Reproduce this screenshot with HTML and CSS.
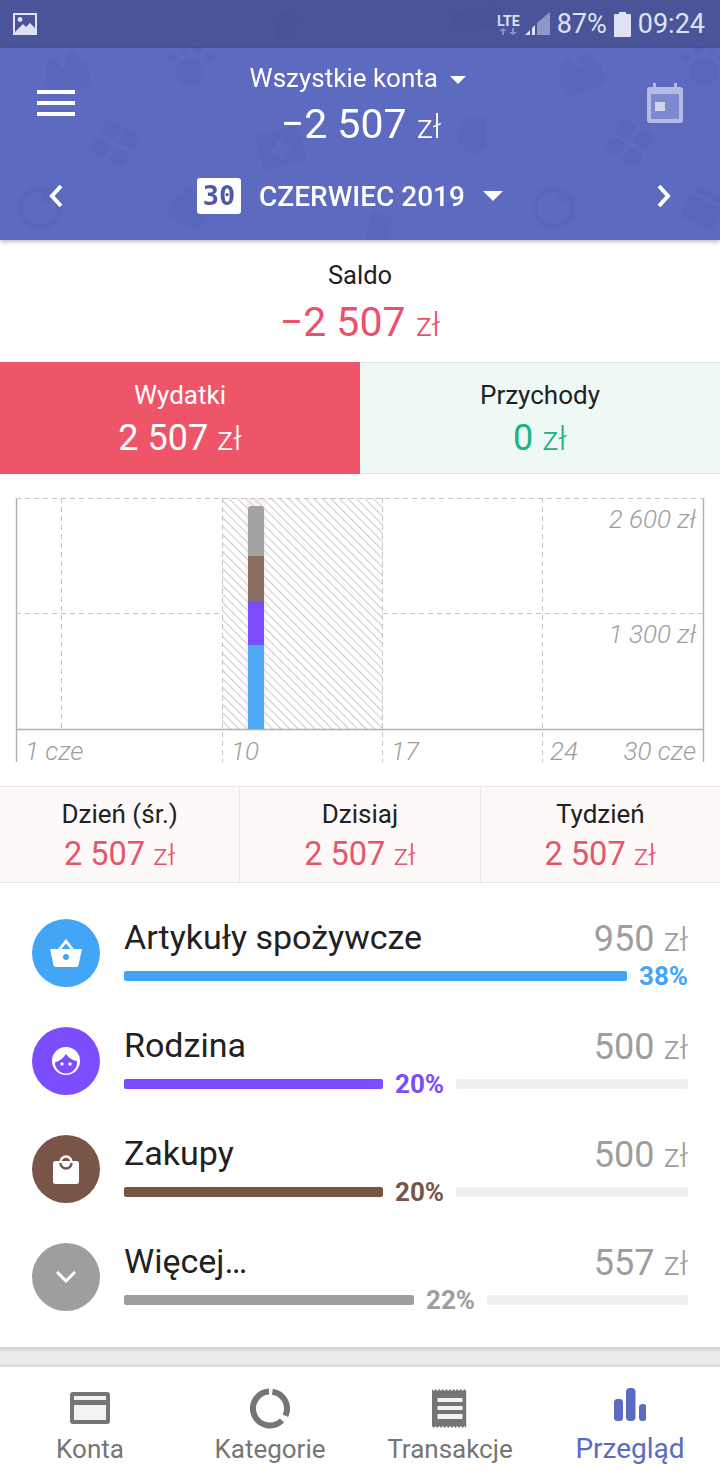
FILE: index.html
```html
<!DOCTYPE html>
<html>
<head>
  <meta charset="UTF-8">
  <title>Przegląd</title>
  <link rel="stylesheet" href="styles.css">
</head>
<body>
  <div class="app">
    <div class="status-bar">
      <svg class="status-pic" width="24" height="22" viewBox="0 0 24 22"><path fill="#dfe2f2" d="M0 0h24v22H0z"/><path fill="#4a5599" d="M2 2h20v13l-5-5-4 4-3-3-8 8z"/><circle cx="7" cy="6.500" r="2.400" fill="#dfe2f2"/></svg>
      <div class="status-right">
        <div class="lte">LTE<svg width="18" height="7" viewBox="0 0 18 7"><path fill="#8a93c6" d="M3 7V3H0l4-3 4 3H5v4zM13 0v4h-3l4 3 4-3h-3V0z"/></svg></div>
        <svg class="signal" width="26" height="26" viewBox="0 0 26 26"><path fill="#dfe2f2" d="M0 24l5-5v5zM7 24v-7l3-3v10z"/><path fill="#8f97c9" d="M12 24V12L25 1v23z"/></svg>
        <span class="status-text">87%</span>
        <svg width="17" height="25" viewBox="0 0 17 25"><path fill="#dfe2f2" d="M5 0h7v2h4a1 1 0 0 1 1 1v21a1 1 0 0 1-1 1H1a1 1 0 0 1-1-1V3a1 1 0 0 1 1-1h4z"/></svg>
        <span class="status-text">09:24</span>
      </div>
    </div>

    <header class="header">
      <!-- znaki wodne w tle -->
      <svg class="watermark" width="720" height="240" viewBox="0 0 720 240">
        <defs>
          <g id="marks">
            <g transform="rotate(-20 68 78)"><rect x="46" y="66" width="44" height="26" rx="8"/><circle cx="58" cy="62" r="7"/><circle cx="78" cy="62" r="7"/></g>
            <g><circle cx="190" cy="72" r="14"/><circle cx="172" cy="58" r="5"/><circle cx="184" cy="50" r="5"/><circle cx="198" cy="50" r="5"/><circle cx="209" cy="58" r="5"/></g>
            <g transform="rotate(30 115 143)"><rect x="96" y="124" width="17" height="17" rx="4"/><rect x="117" y="124" width="17" height="17" rx="4"/><rect x="96" y="145" width="17" height="17" rx="4"/><rect x="117" y="145" width="17" height="17" rx="4"/></g>
            <path fill-rule="evenodd" transform="rotate(-15 280 146)" d="M262 130h36a4 4 0 0 1 4 4v28a4 4 0 0 1-4 4h-36a4 4 0 0 1-4-4v-28a4 4 0 0 1 4-4zm14 10v7h-7v6h7v7h8v-7h7v-6h-7v-7z"/>
            <circle cx="40" cy="208" r="19" fill="none" stroke-width="6" stroke="#2a3480"/>
            <circle cx="47" cy="198" r="5"/>
            <g transform="rotate(25 188 212)"><rect x="170" y="200" width="36" height="26" rx="3"/><rect x="174" y="190" width="28" height="7" rx="2"/></g>
          </g>
        </defs>
        <g fill="#2a3480" opacity="0.065">
          <use href="#marks"/>
          <use href="#marks" transform="translate(514 0)"/>
          <path d="M372 210l22 8-8 24h-22z"/>
          <path d="M462 118h24v30l-14 8-14-14z"/>
          <path d="M280 10l18 6-4 24h-20z"/>
          <path d="M450 12l50-6 4 20-48 6z"/>
        </g>
      </svg>
      <div class="header-top">
        <svg class="menu-icon" width="38" height="26" viewBox="0 0 38 26"><path fill="#fff" d="M0 0h38v4H0zM0 11h38v4H0zM0 22h38v4H0z"/></svg>
        <div class="account">
          <div class="account-name">Wszystkie konta <span class="caret small"></span></div>
          <div class="account-sum">−2 507 <span class="unit">zł</span></div>
        </div>
        <svg class="cal-icon" width="36" height="40" viewBox="0 0 36 40"><path fill="#b5bce3" fill-rule="evenodd" d="M6 0h3v4h18V0h3v4h3a3 3 0 0 1 3 3v30a3 3 0 0 1-3 3H3a3 3 0 0 1-3-3V7a3 3 0 0 1 3-3h3zM4 11v25h28V11z"/><rect x="4" y="11" width="28" height="25" fill="#7e8acf"/><rect x="8" y="19" width="10" height="9" fill="#d0d4ee"/></svg>
      </div>
      <div class="month-row">
        <svg width="16" height="24" viewBox="0 0 16 24"><path fill="none" stroke="#fff" stroke-width="4" d="M13 2L4 12l9 10"/></svg>
        <div class="month">
          <span class="day-badge">30</span>
          <span class="month-name">CZERWIEC 2019</span>
          <span class="caret"></span>
        </div>
        <svg width="16" height="24" viewBox="0 0 16 24"><path fill="none" stroke="#fff" stroke-width="4" d="M3 2l9 10-9 10"/></svg>
      </div>
    </header>

    <section class="saldo">
      <div class="saldo-label">Saldo</div>
      <div class="saldo-sum">−2 507 <span class="unit">zł</span></div>
    </section>

    <section class="split">
      <div class="split-item expense">
        <div class="split-label">Wydatki</div>
        <div class="split-sum">2 507 <span class="unit">zł</span></div>
      </div>
      <div class="split-item income">
        <div class="split-label">Przychody</div>
        <div class="split-sum green">0 <span class="unit">zł</span></div>
      </div>
    </section>

    <section class="chart">
      <svg width="720" height="312" viewBox="0 0 720 312">
        <defs>
          <pattern id="hatch" width="6" height="6" patternUnits="userSpaceOnUse" patternTransform="rotate(-45)">
            <rect width="1.100" height="6" fill="#cdcdcd"/>
          </pattern>
        </defs>
        <rect x="222" y="24" width="161" height="231" fill="url(#hatch)"/>
        <rect x="246" y="24" width="20" height="231" fill="#f9d5da" opacity="0.35"/>
        <path class="ax" d="M16.500 24v264M703.500 24v264M16 255.500h688"/>
        <path class="dash" d="M16 24.500h688M16 139.500h206M383 139.500h321M61.500 24v231M222.500 24v264M382.500 24v264M542.500 24v264"/>
        <rect x="248" y="32" width="16" height="10" rx="3" fill="#a3a3a3"/>
        <rect x="248" y="36" width="16" height="46" fill="#a3a3a3"/>
        <rect x="248" y="82" width="16" height="45" fill="#8d6e63"/>
        <rect x="248" y="127" width="16" height="44" fill="#7c4dff"/>
        <rect x="248" y="171" width="16" height="84" fill="#4dabf5"/>
        <text class="lbl" x="696" y="54" text-anchor="end">2 600 zł</text>
        <text class="lbl" x="696" y="169" text-anchor="end">1 300 zł</text>
        <text class="lbl" x="25" y="286">1 cze</text>
        <text class="lbl" x="231" y="286">10</text>
        <text class="lbl" x="391" y="286">17</text>
        <text class="lbl" x="550" y="286">24</text>
        <text class="lbl" x="696" y="286" text-anchor="end">30 cze</text>
      </svg>
    </section>

    <section class="stats">
      <div class="stat"><div class="stat-label">Dzień (śr.)</div><div class="stat-sum">2 507 <span class="unit">zł</span></div></div>
      <div class="stat"><div class="stat-label">Dzisiaj</div><div class="stat-sum">2 507 <span class="unit">zł</span></div></div>
      <div class="stat"><div class="stat-label">Tydzień</div><div class="stat-sum">2 507 <span class="unit">zł</span></div></div>
    </section>

    <section class="cats">
      <div class="cat">
        <div class="cat-icon blue">
          <svg width="32" height="28" viewBox="0 0 32 28"><path fill="#fff" fill-rule="evenodd" d="M0 10h8L16 0l8 10h8l-3.500 16a2.500 2.500 0 0 1-2.500 2H6a2.500 2.500 0 0 1-2.500-2zM11.500 10h9L16 4.500z"/><circle cx="16" cy="18" r="3" fill="#42a5f5"/></svg>
        </div>
        <div class="cat-body">
          <div class="cat-top"><span class="cat-name">Artykuły spożywcze</span><span class="cat-sum">950 <span class="unit">zł</span></span></div>
          <div class="cat-bar"><div class="bar-fill blue" style="width:503px"></div><span class="pct t-blue">38%</span></div>
        </div>
      </div>
      <div class="cat">
        <div class="cat-icon purple">
          <svg width="28" height="28" viewBox="0 0 28 28"><circle cx="14" cy="14" r="14" fill="#fff"/><path fill="#7c4dff" d="M3 15.500a11 11 0 0 0 22 0c0-.5 0-1 0-1.500-4-.5-8-2.500-11-7-2 3.500-6 7-11 8.500z"/><circle cx="10" cy="17" r="1.700" fill="#fff"/><circle cx="18" cy="17" r="1.700" fill="#fff"/></svg>
        </div>
        <div class="cat-body">
          <div class="cat-top"><span class="cat-name">Rodzina</span><span class="cat-sum">500 <span class="unit">zł</span></span></div>
          <div class="cat-bar"><div class="bar-fill purple" style="width:259px"></div><span class="pct t-purple">20%</span><div class="bar-rest"></div></div>
        </div>
      </div>
      <div class="cat">
        <div class="cat-icon brown">
          <svg width="26" height="30" viewBox="0 0 26 30"><path fill="none" stroke="#fff" stroke-width="2.500" d="M7.500 8a5.500 5.500 0 0 1 11 0"/><rect y="7" width="26" height="23" rx="2.500" fill="#fff"/><path fill="none" stroke="#795548" stroke-width="2.400" d="M7.500 9a5.500 5.500 0 0 0 11 0"/></svg>
        </div>
        <div class="cat-body">
          <div class="cat-top"><span class="cat-name">Zakupy</span><span class="cat-sum">500 <span class="unit">zł</span></span></div>
          <div class="cat-bar"><div class="bar-fill brown" style="width:259px"></div><span class="pct t-brown">20%</span><div class="bar-rest"></div></div>
        </div>
      </div>
      <div class="cat">
        <div class="cat-icon gray">
          <svg width="20" height="12" viewBox="0 0 20 12"><path fill="none" stroke="#fff" stroke-width="3" d="M1 1l9 9 9-9"/></svg>
        </div>
        <div class="cat-body">
          <div class="cat-top"><span class="cat-name">Więcej…</span><span class="cat-sum">557 <span class="unit">zł</span></span></div>
          <div class="cat-bar"><div class="bar-fill gray" style="width:290px"></div><span class="pct t-gray">22%</span><div class="bar-rest"></div></div>
        </div>
      </div>
    </section>

    <div class="gap"></div>

    <nav class="nav">
      <div class="nav-item">
        <svg width="40" height="44" viewBox="0 0 40 44"><rect y="5" width="40" height="32" rx="3" fill="#757575"/><path fill="#f2f2f2" d="M4 9h32v4H4zM4 18h32v15H4z"/></svg>
        <span>Konta</span>
      </div>
      <div class="nav-item">
        <svg width="40" height="44" viewBox="0 0 40 44"><path fill="none" stroke="#757575" stroke-width="6" d="M19 4.500A17 17 0 1 0 32 33.500M22.400 4.700A17 17 0 0 1 35.400 28.700"/></svg>
        <span>Kategorie</span>
      </div>
      <div class="nav-item">
        <svg width="36" height="44" viewBox="0 0 36 44"><path fill="#757575" d="M0 2l1.800 2 1.800-2 1.800 2 1.800-2 1.800 2 1.800-2 1.800 2 1.800-2 1.800 2 1.800-2 1.800 2 1.800-2 1.800 2 1.800-2 1.800 2 1.800-2 1.800 2 1.800-2 1.800 2v37l-1.800-2-1.800 2-1.800-2-1.800 2-1.800-2-1.800 2-1.800-2-1.800 2-1.800-2-1.800 2-1.800-2-1.800 2-1.800-2-1.800 2-1.800-2-1.800 2-1.800-2-1.800 2-1.800-2z"/><path fill="#f2f2f2" d="M5.500 11h25v4h-25zM5.500 19h25v4h-25zM5.500 27h25v5h-25z"/></svg>
        <span>Transakcje</span>
      </div>
      <div class="nav-item active">
        <svg width="32" height="44" viewBox="0 0 32 44"><rect y="12" width="9" height="22" rx="3.500" fill="#5c6bc0"/><rect x="12" y="1" width="9.500" height="33" rx="4" fill="#5c6bc0"/><rect x="25" y="17" width="7.500" height="17" rx="3.500" fill="#5c6bc0"/></svg>
        <span>Przegląd</span>
      </div>
    </nav>
  </div>
</body>
</html>
```

FILE: styles.css
```css
* {
  box-sizing: border-box;
}

body {
  margin: 0;
  background: #fff;
  font-family: Roboto, "Noto Sans", sans-serif;
  color: #212121;
}

.app {
  width: 720px;
  height: 1480px;
  overflow: hidden;
  display: flex;
  flex-direction: column;
}

.unit {
  font-weight: 300;
}

/* pasek statusu */
.status-bar {
  height: 48px;
  background: #4a5599;
  color: #dfe2f2;
  display: flex;
  align-items: center;
  justify-content: space-between;
  padding: 0 15px 0 13px;
}

.status-right {
  display: flex;
  align-items: center;
  gap: 7px;
}

.status-text {
  font-size: 27px;
}

.lte {
  display: flex;
  flex-direction: column;
  align-items: center;
  font-size: 14px;
  font-weight: 700;
  line-height: 14px;
}

.signal {
  margin: 0 -1px 0 -2px;
}

/* naglowek */
.header {
  position: relative;
  height: 192px;
  background: #5c6ac0;
  color: #fff;
  box-shadow: 0 2px 4px rgba(0, 0, 0, 0.25);
  z-index: 1;
}

.watermark {
  position: absolute;
  top: -48px;
  left: 0;
}

.header-top,
.month-row {
  position: relative;
  display: flex;
  align-items: center;
  justify-content: space-between;
}

.header-top {
  height: 110px;
  padding: 0 37px;
}

.account {
  align-self: flex-start;
  padding-top: 15px;
  text-align: center;
}

.account-name {
  margin-right: 6px;
  font-size: 26px;
  line-height: 30px;
}

.account-sum {
  margin-top: 5px;
  font-size: 41px;
  line-height: 52px;
}

.account-sum .unit,
.saldo-sum .unit,
.split-sum .unit,
.cat-sum .unit {
  font-size: 33px;
}

.month-row {
  height: 76px;
  padding: 0 48px;
}

.month {
  display: flex;
  align-items: center;
  margin-right: 20px;
}

.day-badge {
  width: 44px;
  height: 36px;
  margin-right: 18px;
  border-radius: 3px;
  background: #fff;
  color: #4e5aa8;
  font-family: "DejaVu Sans Mono", monospace;
  font-size: 27px;
  font-weight: 700;
  line-height: 36px;
  text-align: center;
}

.month-name {
  font-size: 28px;
  font-weight: 500;
}

.caret {
  display: inline-block;
  width: 0;
  height: 0;
  margin-left: 18px;
  border-left: 10px solid transparent;
  border-right: 10px solid transparent;
  border-top: 10px solid #fff;
}

.caret.small {
  margin-left: 6px;
  border-left-width: 8px;
  border-right-width: 8px;
  border-top-width: 8px;
  vertical-align: 3px;
}

/* saldo */
.saldo {
  height: 122px;
  padding-top: 20px;
  text-align: center;
}

.saldo-label {
  font-size: 25.500px;
  line-height: 30px;
}

.saldo-sum {
  margin-top: 3px;
  font-size: 41px;
  line-height: 58px;
  color: #e9526a;
}

.split {
  height: 112px;
  display: flex;
}

.split-item {
  width: 360px;
  padding-top: 18px;
  text-align: center;
}

.split-label {
  font-size: 26px;
  line-height: 30px;
}

.split-sum {
  margin-top: 3px;
  font-size: 36px;
  line-height: 50px;
}

.expense {
  background: #ee5568;
  color: #fff;
}

.income {
  background: #eef8f5;
  border-top: 1px solid #dfe8e4;
  border-bottom: 1px solid #dfe8e4;
  padding-top: 17px;
}

.green {
  color: #1bb383;
}

/* wykres */
.chart {
  height: 312px;
}

.chart svg {
  display: block;
}

.ax {
  fill: none;
  stroke: #b0b0b0;
  stroke-width: 1.400;
}

.dash {
  fill: none;
  stroke: #c4c4c4;
  stroke-width: 1;
  stroke-dasharray: 5 4;
}

.lbl {
  font-family: Roboto, sans-serif;
  font-size: 26px;
  font-style: italic;
  font-weight: 300;
  fill: #9e9e9e;
}

/* statystyki */
.stats {
  height: 97px;
  display: flex;
  background: #fdf9f8;
  border-top: 1px solid #ebe8e7;
  border-bottom: 1px solid #e8e5e4;
}

.stat {
  flex: 1;
  padding-top: 12px;
  text-align: center;
  border-right: 1px solid #ebe6e5;
}

.stat:last-child {
  border-right: none;
}

.stat-label {
  font-size: 26px;
  line-height: 30px;
}

.stat-sum {
  margin-top: 1px;
  font-size: 32.500px;
  line-height: 48px;
  color: #e4566c;
}

.stat-sum .unit {
  font-size: 30px;
}

/* kategorie */
.cats {
  height: 464px;
  padding-top: 18px;
}

.cat {
  height: 108px;
  display: flex;
  align-items: flex-start;
  padding: 18px 32px 0;
}

.cat-icon {
  flex: none;
  width: 68px;
  height: 68px;
  border-radius: 50%;
  margin-right: 24px;
  display: flex;
  align-items: center;
  justify-content: center;
}

.blue { background: #42a5f5; }
.purple { background: #7c4dff; }
.brown { background: #795548; }
.gray { background: #9e9e9e; }

.t-blue { color: #42a5f5; }
.t-purple { color: #7c4dff; }
.t-brown { color: #795548; }
.t-gray { color: #9e9e9e; }

.cat-body {
  flex: 1;
  min-width: 0;
}

.cat-top {
  display: flex;
  justify-content: space-between;
  align-items: center;
  height: 40px;
}

.cat-name {
  margin-top: -4px;
  font-size: 34px;
}

.cat-sum {
  font-size: 36px;
  color: #9e9e9e;
}

.cat-bar {
  display: flex;
  align-items: center;
  height: 30px;
  margin-top: 2px;
}

.bar-fill {
  flex: none;
  height: 10px;
  border-radius: 2px;
}

.bar-rest {
  flex: 1;
  height: 10px;
  border-radius: 2px;
  background: #eeeeee;
}

.pct {
  font-size: 26px;
  font-weight: 700;
  margin: 0 12px;
  white-space: nowrap;
}

.pct:last-child {
  margin-right: 0;
}

.gap {
  height: 20px;
  background: linear-gradient(#cfcfcf, #ececec 30%, #ececec 75%, #d6d6d6);
}

/* dolna nawigacja */
.nav {
  height: 113px;
  display: flex;
  background: #fff;
}

.nav-item {
  flex: 1;
  display: flex;
  flex-direction: column;
  align-items: center;
  padding-top: 20px;
  font-size: 26px;
  color: #757575;
}

.nav-item span {
  line-height: 36px;
}

.nav-item.active {
  font-size: 28px;
  color: #5c6bc0;
}
```
